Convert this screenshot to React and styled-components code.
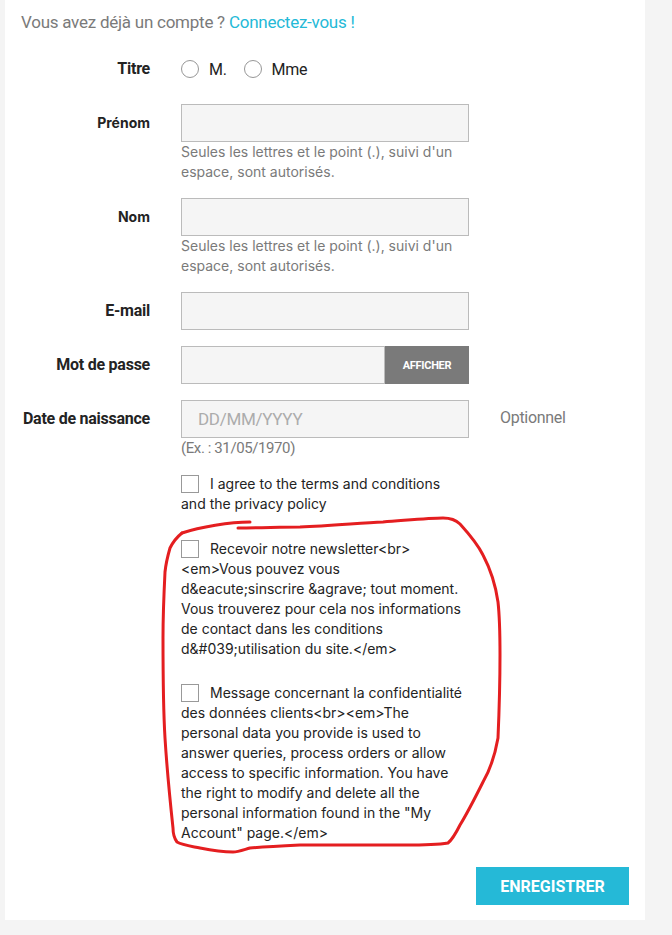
import React from 'react';
import styled, { createGlobalStyle } from 'styled-components';

const GlobalStyle = createGlobalStyle`
  html, body {
    margin: 0;
    padding: 0;
    background: #f4f4f4;
  }
  body {
    font-family: 'Inter', 'Noto Sans', sans-serif;
  }
`;

const narrow = "'Roboto', 'Liberation Sans', sans-serif";

const Page = styled.div`
  position: relative;
  width: 672px;
  height: 935px;
  background: #f4f4f4;
  overflow: hidden;
`;

const Card = styled.div`
  margin-left: 5px;
  width: 640px;
  background: #fff;
  padding: 12px 16px 15px 0;
  box-sizing: border-box;
`;

const Intro = styled.p`
  margin: 0 0 27px 16px;
  font-family: ${narrow};
  font-size: 17px;
  line-height: 20px;
  color: #7a7a7a;
  letter-spacing: -0.25px;
`;

const Link = styled.a`
  color: #24b9d7;
  text-decoration: none;
`;

const Row = styled.div`
  display: grid;
  grid-template-columns: 145px 288px 1fr;
  column-gap: 31px;
  align-items: start;
  margin-bottom: ${p => p.$gap || 16}px;
`;

const Label = styled.label`
  text-align: right;
  white-space: nowrap;
  font-family: ${p => p.$narrow ? narrow : "'Inter', sans-serif"};
  font-weight: 700;
  font-size: ${p => p.$narrow ? 16 : 14}px;
  letter-spacing: ${p => p.$narrow ? -0.25 : 0}px;
  color: #232323;
  line-height: ${p => p.$lh || 38}px;
`;

const Field = styled.div`
  display: flex;
  flex-direction: column;
`;

const InputBox = styled.div`
  display: flex;
  height: 38px;
`;

const Input = styled.input`
  display: block;
  width: 100%;
  min-width: 0;
  height: 38px;
  box-sizing: border-box;
  border: 1px solid #bbb;
  background: #f5f5f5;
  padding: 0 16px;
  font-family: ${narrow};
  font-size: 17px;
  letter-spacing: -0.3px;
  color: #232323;
  outline: none;
  &::placeholder {
    color: #acacac;
  }
`;

const ShowButton = styled.button`
  flex: none;
  width: 84px;
  height: 38px;
  border: none;
  background: #7a7a7a;
  color: #fff;
  font-family: ${narrow};
  font-weight: 700;
  font-size: 11px;
  letter-spacing: -0.3px;
  padding: 0;
`;

const Help = styled.div`
  font-family: ${p => p.$narrow ? narrow : "'Inter', sans-serif"};
  font-size: ${p => p.$narrow ? 15 : 14}px;
  letter-spacing: ${p => p.$narrow ? -0.4 : 0}px;
  line-height: 20px;
  color: #7a7a7a;
`;

const Comment = styled.div`
  font-family: ${narrow};
  font-size: 16px;
  letter-spacing: -0.3px;
  line-height: 36px;
  color: #7a7a7a;
`;

const Radios = styled.div`
  display: flex;
  align-items: center;
  height: 20px;
`;

const RadioItem = styled.span`
  display: inline-flex;
  align-items: center;
  margin-right: 17px;
  font-family: ${narrow};
  font-size: 16px;
  letter-spacing: -0.3px;
  color: #232323;
`;

const RadioCircle = styled.span`
  width: 18px;
  height: 18px;
  box-sizing: border-box;
  border: 1px solid #979797;
  border-radius: 50%;
  margin-right: 10px;
  background: #fff;
`;

const CheckRow = styled.div`
  margin-left: 176px;
  width: 310px;
  margin-bottom: ${p => p.$gap || 24}px;
  white-space: pre-line;
  font-family: 'Inter', sans-serif;
  font-size: 14px;
  line-height: 20px;
  color: #232323;
`;

const Box = styled.span`
  display: inline-block;
  width: 18px;
  height: 18px;
  box-sizing: border-box;
  border: 1px solid #999;
  vertical-align: -4px;
  margin-right: 11px;
  background: #fff;
`;

const Footer = styled.div`
  display: flex;
  justify-content: flex-end;
`;

const Submit = styled.button`
  width: 153px;
  height: 38px;
  border: none;
  background: #25b9d7;
  color: #fff;
  font-family: 'Roboto', sans-serif;
  font-weight: 700;
  font-size: 16px;
  text-transform: uppercase;
`;

const Scribble = styled.svg`
  position: absolute;
  top: 0;
  left: 0;
  pointer-events: none;
`;

const newsletter = [
  'Recevoir notre newsletter<br>',
  '<em>Vous pouvez vous',
  'd&eacute;sinscrire &agrave; tout moment.',
  'Vous trouverez pour cela nos informations',
  'de contact dans les conditions',
  'd&#039;utilisation du site.</em>',
].join('\n');

const privacy = [
  'Message concernant la confidentialité',
  'des données clients<br><em>The',
  'personal data you provide is used to',
  'answer queries, process orders or allow',
  'access to specific information. You have',
  'the right to modify and delete all the',
  'personal information found in the "My',
  'Account" page.</em>',
].join('\n');

const App = () => {
  return (
    <Page>
      <GlobalStyle />
      <Card>
        <Intro>Vous avez déjà un compte ? <Link href="#">Connectez-vous !</Link></Intro>

        <Row $gap={25}>
          <Label $narrow $lh={20}>Titre</Label>
          <Radios>
            <RadioItem><RadioCircle />M.</RadioItem>
            <RadioItem><RadioCircle />Mme</RadioItem>
          </Radios>
        </Row>

        <Row>
          <Label>Prénom</Label>
          <Field>
            <Input />
            <Help>Seules les lettres et le point (.), suivi d'un espace, sont autorisés.</Help>
          </Field>
        </Row>

        <Row>
          <Label>Nom</Label>
          <Field>
            <Input />
            <Help>Seules les lettres et le point (.), suivi d'un espace, sont autorisés.</Help>
          </Field>
        </Row>

        <Row>
          <Label $narrow>E-mail</Label>
          <Field>
            <Input />
          </Field>
        </Row>

        <Row>
          <Label $narrow>Mot de passe</Label>
          <InputBox>
            <Input type="password" />
            <ShowButton>AFFICHER</ShowButton>
          </InputBox>
        </Row>

        <Row>
          <Label $narrow>Date de naissance</Label>
          <Field>
            <Input placeholder="DD/MM/YYYY" />
            <Help $narrow>(Ex. : 31/05/1970)</Help>
          </Field>
          <Comment>Optionnel</Comment>
        </Row>

        <CheckRow $gap={25}>
          <Box />{'I agree to the terms and conditions\nand the privacy policy'}
        </CheckRow>

        <CheckRow>
          <Box />{newsletter}
        </CheckRow>

        <CheckRow>
          <Box />{privacy}
        </CheckRow>

        <Footer>
          <Submit>Enregistrer</Submit>
        </Footer>
      </Card>

      <Scribble width="672" height="935" viewBox="0 0 672 935">
        <path
          d="M182 533 C200 527 230 522 250 522"
          fill="none" stroke="#e41e20" strokeWidth="3" strokeLinecap="round"
        />
        <path
          d="M238 528 C260 528 280 527 300 527 C330 526 360 523 383 522 C410 520 430 518 443 518 C452 518 456 520 460 524 C470 535 478 545 483 555 C492 572 496 588 498 602 C500 620 500 640 500 655 C500 690 499 715 498 738 C495 755 490 770 483 782 C475 798 468 812 460 825 C456 833 453 839 448 843 C430 846 405 845 383 845 C355 845 325 845 300 845 C280 846 262 847 250 848 C243 850 238 852 233 852 C220 852 210 850 200 848 C190 846 182 845 177 842 C174 838 173 833 173 828 C170 800 167 770 165 738 C163 705 163 670 163 638 C163 615 164 592 165 572 C166 562 168 555 170 548 C173 542 177 537 182 533"
          fill="none" stroke="#e41e20" strokeWidth="3" strokeLinecap="round" strokeLinejoin="round"
        />
      </Scribble>
    </Page>
  );
};

export default App;
